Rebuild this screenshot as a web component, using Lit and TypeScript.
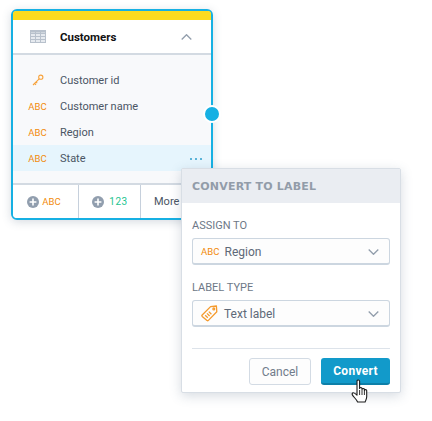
import { html, css, LitElement, svg } from "lit";
import { customElement } from "lit/decorators.js";

const chevron = (up = false) => html`<svg class="chev" width="11" height="6" viewBox="0 0 11 6" fill="none" stroke="#929eac" stroke-width="1.3">
  <path d=${up ? "M.7 5.5l4.8-4.8 4.8 4.8" : "M.7.5l4.8 4.8 4.8-4.8"} />
</svg>`;

const tableIcon = html`<svg width="16" height="13" viewBox="0 0 16 13">
  <rect x="0" y="0" width="16" height="13" fill="#e6eaef" />
  <rect x="0" y="0" width="16" height="2.5" fill="#b8c1cc" />
  ${[0.5, 3.5, 6.5, 9.5, 12.5].map(
    (y) => svg`<path d="M0 ${y}h16" stroke="#b8c1cc" />`
  )}
  ${[0.5, 5.5, 10.5, 15.5].map(
    (x) => svg`<path d="M${x} 0v13" stroke="#b8c1cc" />`
  )}
</svg>`;

const keyIcon = html`<svg width="12" height="12" viewBox="0 0 12 12" fill="none" stroke="#f7a23b" stroke-width="1.1">
  <circle cx="8.8" cy="3.2" r="2.1" />
  <path d="M7.2 4.8L1 11M2.6 9.4l1.4 1.4M4 8l1.2 1.2" />
</svg>`;

const tagIcon = html`<svg width="17" height="17" viewBox="0 0 17 17" fill="none" stroke="#f59a2c" stroke-width="1.3" stroke-linejoin="round">
  <path d="M1.2 10L9.6 1.6 15.4 1l.4 5.8-8.4 8.6a1 1 0 0 1-1.4 0L1.2 11.4a1 1 0 0 1 0-1.4z" />
  <circle cx="12.8" cy="3.9" r="0.9" />
  <path d="M4.2 10.2l2.6 2.6M6 8.4l2.6 2.6M7.8 6.6l2.6 2.6" />
</svg>`;

const plusIcon = html`<svg width="12" height="12" viewBox="0 0 12 12">
  <circle cx="6" cy="6" r="6" fill="#919eae" />
  <path d="M6 2.6v6.8M2.6 6h6.8" stroke="#fff" stroke-width="1.6" />
</svg>`;

const handCursor = html`<svg class="cursor" width="19" height="25" viewBox="0 0 19 25">
  <path d="M6 2.2c0-1.6 2.6-1.6 2.6 0V9.4c0-1.3 2.4-1.3 2.4 0v1c0-1.2 2.4-1.2 2.4 0v1c0-1.1 2.3-1.1 2.3.2v6.2c0 2.6-1.2 3.6-1.6 5.2H6.6C5.8 21 4.4 19.6 2.6 17.6 1.2 16 .6 14.8 1.6 14c1-.8 2.6.4 4.4 2.2z" fill="#fff" stroke="#1c1c1c" stroke-width="1.1" stroke-linejoin="round" />
  <path d="M8.6 11v5M11 11v5M13.4 11.6v4.4" stroke="#1c1c1c" stroke-width="0.9" />
</svg>`;

@customElement("app-root")
export class AppRoot extends LitElement {
  static styles = css`
    :host {
      display: block;
      position: relative;
      width: 432px;
      height: 421px;
      background: #fff;
      font-family: Roboto, "Liberation Sans", sans-serif;
      font-size: 11px;
      color: #4a5564;
      overflow: hidden;
    }
    .stage {
      padding: 9px 0 0 11px;
    }
    .card {
      position: relative;
      box-sizing: border-box;
      width: 202px;
      height: 211px;
      border: 2px solid #16b0e3;
      border-radius: 6px;
      background: #f8f9fb;
      box-shadow: 0 2px 10px rgba(70, 90, 120, 0.22);
      display: flex;
      flex-direction: column;
    }
    .stripe {
      height: 9px;
      background: #fcdb1f;
      border-radius: 3px 3px 0 0;
    }
    .head {
      height: 35px;
      box-sizing: border-box;
      background: #fff;
      border-bottom: 2px solid #d3dae2;
      display: flex;
      align-items: center;
      padding: 0 19px 0 17px;
      font-weight: 700;
      font-size: 11.5px;
      color: #111;
    }
    .head .name {
      margin-left: 14px;
      flex: 1;
    }
    .rows {
      padding-top: 12px;
      flex: 1;
    }
    .row {
      height: 26px;
      display: flex;
      align-items: center;
    }
    .row.active {
      background: #e6f5fd;
    }
    .row .ic {
      width: 47px;
      display: flex;
      justify-content: center;
      padding-left: 2px;
      box-sizing: border-box;
    }
    .row .label {
      flex: 1;
    }
    .abc {
      font-size: 9.5px;
      color: #f28b0c;
      letter-spacing: 0.1px;
    }
    .dots {
      display: flex;
      gap: 3px;
      margin-right: 9px;
      margin-top: 2px;
    }
    .dots i {
      width: 2px;
      height: 2px;
      background: #5cb4d8;
    }
    .foot {
      height: 35px;
      box-sizing: border-box;
      border-top: 2px solid #d3dae2;
      background: #fff;
      border-radius: 0 0 4px 4px;
      display: flex;
    }
    .foot .cell {
      display: flex;
      align-items: center;
      justify-content: center;
      gap: 4px;
      border-right: 1px solid #c6d0dc;
      box-sizing: border-box;
      font-size: 9.5px;
    }
    .foot .first {
      width: 66px;
      gap: 3px;
      padding-right: 3px;
    }
    .foot .second {
      width: 62px;
      gap: 5px;
      padding-left: 1px;
    }
    .foot .cell.more {
      border-right: 0;
      justify-content: flex-start;
      font-size: 11px;
      padding-left: 13px;
    }
    .num {
      color: #22c48f;
      font-size: 10px;
      letter-spacing: 0.5px;
    }
    .dot {
      position: absolute;
      right: -10px;
      top: 94px;
      width: 14px;
      height: 14px;
      border-radius: 50%;
      background: #16b0e3;
      border: 2px solid #fff;
    }
    .popover {
      position: absolute;
      left: 181px;
      top: 168px;
      width: 220px;
      height: 225px;
      box-sizing: border-box;
      background: #fff;
      border: 1px solid #d8dee5;
      border-radius: 2px;
      box-shadow: 0 3px 12px rgba(70, 90, 120, 0.22);
      display: flex;
      flex-direction: column;
    }
    .pop-head {
      height: 34px;
      background: #eaedf2;
      display: flex;
      align-items: center;
      padding-left: 10px;
      font-family: "DejaVu Sans", sans-serif;
      font-size: 11px;
      font-weight: 700;
      letter-spacing: 0.2px;
      color: #929ca9;
    }
    .pop-body {
      padding: 15px 10px 0;
      flex: 1;
      display: flex;
      flex-direction: column;
    }
    .field-label {
      font-size: 11px;
      color: #6d7887;
      height: 15px;
      line-height: 15px;
      margin-bottom: 5px;
    }
    .select {
      height: 27px;
      box-sizing: border-box;
      border: 1px solid #ccd6e0;
      border-bottom-width: 2px;
      border-radius: 3px;
      background: #fdfdfd;
      display: flex;
      align-items: center;
      padding: 1px 10px 0 9px;
      font-size: 12px;
      color: #5e6978;
      margin-bottom: 15px;
    }
    .select .val {
      flex: 1;
      margin-left: 5px;
    }
    .select .val.tag {
      margin-left: 6px;
    }
    .select .abc {
      margin-left: -1px;
    }
    .select svg:first-child {
      margin-left: -1px;
    }
    .pop-foot {
      margin-top: 6px;
      border-top: 1px solid #dde3ea;
      padding-top: 9px;
      display: flex;
      justify-content: flex-end;
      gap: 10px;
    }
    .btn {
      height: 27px;
      box-sizing: border-box;
      border-radius: 3px;
      font-family: inherit;
      font-size: 12px;
      padding: 0;
    }
    .btn.cancel {
      width: 62px;
      background: #fdfdfd;
      border: 1px solid #d3dbe4;
      color: #717c8b;
    }
    .btn.ok {
      width: 69px;
      background: #129aca;
      border: 0;
      border-bottom: 2px solid #0d7fa8;
      color: #fff;
      font-weight: 700;
      letter-spacing: 0.3px;
    }
    .cursor {
      position: absolute;
      left: 351px;
      top: 379px;
    }
  `;

  render() {
    return html`
      <div class="stage">
        <div class="card">
          <div class="stripe"></div>
          <div class="head">
            ${tableIcon}
            <span class="name">Customers</span>
            ${chevron(true)}
          </div>
          <div class="rows">
            <div class="row"><span class="ic">${keyIcon}</span><span class="label">Customer id</span></div>
            <div class="row"><span class="ic"><span class="abc">ABC</span></span><span class="label">Customer name</span></div>
            <div class="row"><span class="ic"><span class="abc">ABC</span></span><span class="label">Region</span></div>
            <div class="row active">
              <span class="ic"><span class="abc">ABC</span></span><span class="label">State</span>
              <span class="dots"><i></i><i></i><i></i></span>
            </div>
          </div>
          <div class="foot">
            <div class="cell first">${plusIcon}<span class="abc">ABC</span></div>
            <div class="cell second">${plusIcon}<span class="num">123</span></div>
            <div class="cell more">More</div>
          </div>
          <div class="dot"></div>
        </div>
      </div>
      <div class="popover">
        <div class="pop-head">CONVERT TO LABEL</div>
        <div class="pop-body">
          <div class="field-label">ASSIGN TO</div>
          <div class="select">
            <span class="abc">ABC</span><span class="val">Region</span>${chevron()}
          </div>
          <div class="field-label">LABEL TYPE</div>
          <div class="select">
            ${tagIcon}<span class="val tag">Text label</span>${chevron()}
          </div>
          <div class="pop-foot">
            <button class="btn cancel">Cancel</button>
            <button class="btn ok">Convert</button>
          </div>
        </div>
      </div>
      ${handCursor}
    `;
  }
}
